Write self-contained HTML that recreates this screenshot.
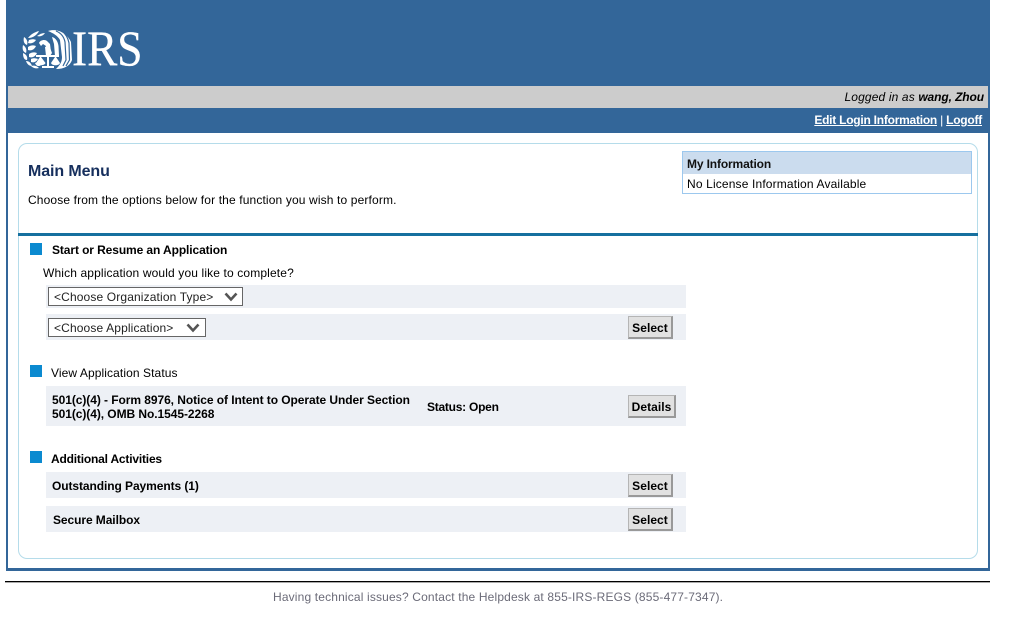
<!DOCTYPE html>
<html><head><meta charset="utf-8"><style>
html,body{margin:0;padding:0;background:#fff;}
body{width:1018px;height:624px;position:relative;overflow:hidden;font-family:"Liberation Sans",Arial,sans-serif;font-size:12px;color:#000;letter-spacing:.135px;}
.a{position:absolute;white-space:nowrap;line-height:14px;}
.r{position:absolute;background:#edf0f5;left:46px;width:640px;}
.sq{position:absolute;left:30px;width:12px;height:12px;background:#0b8ad0;}
.b{font-weight:bold;letter-spacing:-.08px;}
.btn{position:absolute;box-sizing:border-box;height:23px;background:#e1e1e1;border:1px solid #b5b5b5;border-right:2px solid #999;border-bottom:2px solid #999;font-weight:bold;text-align:center;line-height:22px;color:#000;letter-spacing:.05px;}
.sel{position:absolute;box-sizing:border-box;left:48px;height:19px;background:#fff;border:1px solid #666;line-height:18px;padding-left:5px;color:#222;}
.sel svg{position:absolute;top:4px;}
</style></head><body>
<div style="position:absolute;left:6px;top:0;width:984px;height:571px;box-sizing:border-box;background:#fff;border:2px solid #336699;border-bottom-width:3px;"></div>
<div style="position:absolute;left:6px;top:0;width:984px;height:86px;background:#336699;"></div>
<div style="position:absolute;left:8px;top:86px;width:980px;height:22px;background:#cccccc;"></div>
<div style="position:absolute;left:6px;top:108px;width:984px;height:25px;background:#336699;"></div>

<svg style="position:absolute;left:0;top:0;" width="160" height="80" viewBox="0 0 160 80">
<g fill="#fff">
<path d="M28 38 C31 34 35 32 39 31 C37 35 33 38 28 38Z"/>
<path d="M37 36 C40 34 42 33 45 33 C43 36 40 37 37 36Z"/>
<path d="M24 37 C27 39 28 42 27 45 C24 44 23 41 24 37Z"/>
<path d="M29 40 C32 39 34 39 36 40 C34 43 31 44 28 43Z"/>
<path d="M23 45 C26 47 27 50 26 53 C23 52 22 49 23 45Z"/>
<path d="M28 47 C31 45 33 45 36 46 C34 50 31 51 28 50Z"/>
<path d="M23 53 C26 54 28 57 27 60 C24 60 23 57 23 53Z"/>
<path d="M29 54 C32 52 34 52 37 53 C35 57 32 58 29 57Z"/>
<path d="M26 61 C29 61 31 63 32 66 C29 66 27 64 26 61Z"/>
<path d="M31 59 C33 58 35 58 38 59 C36 62 34 63 31 62Z"/>
<path d="M31 66 C34 65 37 66 39 68 C36 69 33 68 31 66Z"/>
<path d="M35 63 C37 62 39 63 41 65 C39 67 36 66 35 63Z"/>
<path d="M39 43 C40 40 45 39 47 41 L50 44 L51 52 L47 52 L46 46 L43 44 L41 46 Z"/>
<path d="M45 47 L49 45 L52 53 L50 56 L46 56Z"/>
<path d="M36 55 L59 55 L59 57 L49 57 L49 66 L54 66 L54 68 L42 68 L42 66 L47 66 L47 57 L36 57Z"/>
<path d="M40 57 L41 57 L45.500 63 C44.500 66 37 66 36 63Z M55 57 L56 57 L60 63 C59 66 52 66 51 63Z"/>
<path d="M48 31 C57 28 67 33 71 42 L72 60 C70 66 64 69 56 69 C60 65 62 62 62 57 L60 40 C58 36 53 33 48 31Z"/>
<path d="M52 37 C56 38 58 42 58.500 46 L59 56 L55 56 L54 44Z"/>
</g>
<g fill="none" stroke="#336699" stroke-width="1.200">
<path d="M56 31 C61 33 64 37 65 42 L66 60 L63 66"/>
<path d="M62 31 C66 34 68 38 69 43 L69.500 60 L66 66"/>
</g>
<text x="72" y="65" font-family="'Liberation Serif',serif" font-size="50" fill="#fff" stroke="#fff" stroke-width=".3" letter-spacing="0" textLength="70.500" lengthAdjust="spacingAndGlyphs">IRS</text>
</svg>

<div class="a" style="right:34px;top:90px;font-style:italic;">Logged in as <b style="letter-spacing:-.1px;">wang, Zhou</b></div>
<div class="a" style="right:36px;top:113px;color:#fff;font-weight:bold;letter-spacing:-.24px;"><span style="text-decoration:underline;">Edit Login Information</span> <span style="font-weight:normal;">|</span> <span style="text-decoration:underline;">Logoff</span></div>

<div style="position:absolute;left:18px;top:143px;width:960px;height:416px;box-sizing:border-box;border:1px solid #b5dcea;border-radius:9px;"></div>

<div class="a" style="left:28px;top:163px;font-size:16px;line-height:18px;font-weight:bold;color:#162f5d;letter-spacing:-.1px;">Main Menu</div>
<div class="a" style="left:28px;top:193px;">Choose from the options below for the function you wish to perform.</div>

<div style="position:absolute;left:682px;top:151px;width:290px;height:43px;box-sizing:border-box;border:1px solid #9cc8ee;background:#fff;">
<div style="height:22px;background:#cbdcee;font-weight:bold;line-height:24px;padding-left:4px;color:#111;letter-spacing:-.14px;">My Information</div>
<div style="line-height:20px;padding-left:4px;letter-spacing:.15px;">No License Information Available</div>
</div>

<div style="position:absolute;left:18px;top:233px;width:960px;height:3px;background:#16709f;"></div>

<div class="sq" style="top:243px;"></div>
<div class="a b" style="left:52px;top:243px;letter-spacing:-.1px;">Start or Resume an Application</div>
<div class="a" style="left:43px;top:266px;">Which application would you like to complete?</div>

<div class="r" style="top:285px;height:23px;"></div>
<div class="sel" style="top:287px;width:195px;">&lt;Choose Organization Type&gt;<svg style="left:175px;" width="14" height="10" viewBox="0 0 14 10"><path d="M1.500 1.500 L7 7.500 L12.500 1.500" fill="none" stroke="#555" stroke-width="2.600"/></svg></div>
<div class="r" style="top:314px;height:26px;"></div>
<div class="sel" style="top:318px;width:158px;">&lt;Choose Application&gt;<svg style="left:137px;" width="14" height="10" viewBox="0 0 14 10"><path d="M1.500 1.500 L7 7.500 L12.500 1.500" fill="none" stroke="#555" stroke-width="2.600"/></svg></div>
<div class="btn" style="left:628px;top:316px;width:45px;">Select</div>

<div class="sq" style="top:365px;"></div>
<div class="a" style="left:51px;top:366px;letter-spacing:.09px;">View Application Status</div>
<div class="r" style="top:386px;height:40px;"></div>
<div class="a b" style="left:52px;top:393px;letter-spacing:-.065px;">501(c)(4) - Form 8976, Notice of Intent to Operate Under Section<br>501(c)(4), OMB No.1545-2268</div>
<div class="a b" style="left:427px;top:400px;letter-spacing:-.25px;">Status: Open</div>
<div class="btn" style="left:628px;top:395px;width:48px;">Details</div>

<div class="sq" style="top:451px;"></div>
<div class="a b" style="left:51px;top:452px;letter-spacing:-.19px;">Additional Activities</div>
<div class="r" style="top:472px;height:26px;"></div>
<div class="a b" style="left:52px;top:479px;">Outstanding Payments (1)</div>
<div class="btn" style="left:628px;top:474px;width:45px;">Select</div>
<div class="r" style="top:506px;height:26px;"></div>
<div class="a b" style="left:53px;top:513px;">Secure Mailbox</div>
<div class="btn" style="left:628px;top:508px;width:45px;">Select</div>

<div style="position:absolute;left:5px;top:581px;width:985px;height:1px;background:#000;"></div>
<div style="position:absolute;left:5px;top:582px;width:985px;height:1px;background:#aaa;"></div>
<div class="a" style="left:273px;top:590px;color:#6b6b78;letter-spacing:.155px;">Having technical issues? Contact the Helpdesk at 855-IRS-REGS (855-477-7347).</div>
</body></html>
